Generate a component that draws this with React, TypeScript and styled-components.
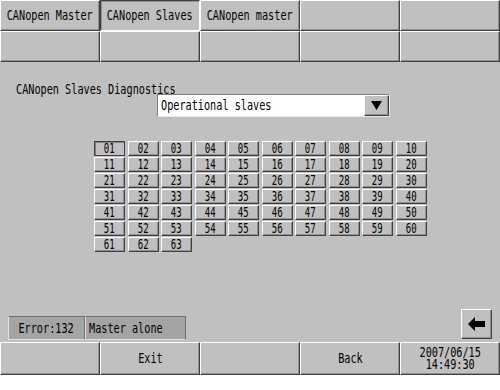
import React from "react";
import styled, { createGlobalStyle, css } from "styled-components";

const GlobalStyle = createGlobalStyle`
  html, body { margin: 0; padding: 0; background: #ffffff; }
  * { box-sizing: border-box; }
`;

const Screen = styled.div`
  width: 500px;
  height: 375px;
  background: #c0c0c0;
  display: flex;
  flex-direction: column;
  font-family: "DejaVu Sans Mono", "Liberation Mono", monospace;
  font-size: 13.7px;
  line-height: 11px;
  color: #000;
`;

const raised = css`
  border-top: 1px solid #ffffff;
  border-left: 1px solid #ffffff;
  border-bottom: 1px solid #404040;
  border-right: 1px solid #404040;
  box-shadow: inset -1px -1px 0 #909090;
`;

const sunken = css`
  border-top: 1px solid #404040;
  border-left: 1px solid #404040;
  border-bottom: 1px solid #ffffff;
  border-right: 1px solid #ffffff;
  box-shadow: inset 1px 1px 0 #909090;
`;

const ButtonBar = styled.div<{ $rows: number; $h: number }>`
  display: grid;
  grid-template-columns: repeat(5, 100px);
  grid-template-rows: repeat(${(p) => p.$rows}, ${(p) => p.$h}px);
`;

const PanelButton = styled.div<{ $pressed?: boolean }>`
  background: #c0c0c0;
  display: flex;
  flex-direction: column;
  align-items: center;
  justify-content: center;
  ${(p) => (p.$pressed ? sunken : raised)}
`;

const Label = styled.span<{ $size?: number; $scale?: number; $origin?: string; $lh?: number }>`
  display: inline-block;
  white-space: pre;
  text-align: center;
  font-size: ${(p) => p.$size ?? 13.7}px;
  line-height: ${(p) => p.$lh ?? 11}px;
  transform: scaleX(${(p) => p.$scale ?? 0.745});
  transform-origin: ${(p) => p.$origin ?? "center"};
`;

const Main = styled.div`
  flex: 1;
  display: flex;
  flex-direction: column;
`;

const Title = styled.div`
  margin: 22px 0 0 16px;
  height: 10px;
  display: flex;
  align-items: flex-start;
`;

const Dropdown = styled.div`
  margin: 0 0 0 157px;
  width: 233px;
  height: 23px;
  background: #ffffff;
  display: flex;
  border-top: 1px solid #808080;
  border-left: 1px solid #808080;
  border-bottom: 1px solid #e8e8e8;
  border-right: 1px solid #e8e8e8;
`;

const DropText = styled.div`
  flex: 1;
  display: flex;
  align-items: center;
  padding-left: 3px;
`;

const DropButton = styled.div`
  width: 25px;
  background: #c0c0c0;
  display: flex;
  align-items: center;
  justify-content: center;
  ${raised}
`;

const SlaveGrid = styled.div`
  margin: 24px 0 0 94px;
  display: grid;
  grid-template-columns: repeat(10, 31px);
  grid-auto-rows: 15px;
  column-gap: 2.5px;
  row-gap: 1px;
`;

const Cell = styled.div<{ $selected?: boolean }>`
  background: #c0c0c0;
  display: flex;
  align-items: center;
  justify-content: center;
  ${(p) =>
    p.$selected
      ? css`
          border: 1px solid #404040;
          box-shadow: inset 1px 1px 0 #808080;
        `
      : raised}
`;

const Footer = styled.div`
  margin-top: auto;
  padding: 0 8px 2px 8px;
  display: flex;
  align-items: flex-end;
  justify-content: space-between;
`;

const StatusGroup = styled.div`
  display: flex;
`;

const StatusBox = styled.div<{ $w: number; $center?: boolean }>`
  width: ${(p) => p.$w}px;
  height: 24px;
  background: #a4a4a4;
  display: flex;
  align-items: center;
  justify-content: ${(p) => (p.$center ? "center" : "flex-start")};
  padding-left: ${(p) => (p.$center ? 0 : 3)}px;
  border-top: 1px solid #707070;
  border-left: 1px solid #e0e0e0;
  border-bottom: 1px solid #e0e0e0;
  border-right: 1px solid #707070;
`;

const ArrowButton = styled.div`
  width: 31px;
  height: 30px;
  margin-bottom: 1px;
  background: #c0c0c0;
  display: flex;
  align-items: center;
  justify-content: center;
  ${raised}
`;

const cells = Array.from({ length: 63 }, (_, i) => String(i + 1).padStart(2, "0"));

export default function App() {
  return (
    <>
      <GlobalStyle />
      <Screen>
        <ButtonBar $rows={2} $h={31}>
          <PanelButton><Label>CANopen Master</Label></PanelButton>
          <PanelButton $pressed><Label>CANopen Slaves</Label></PanelButton>
          <PanelButton><Label>CANopen master</Label></PanelButton>
          <PanelButton />
          <PanelButton />
          <PanelButton />
          <PanelButton />
          <PanelButton />
          <PanelButton />
          <PanelButton />
        </ButtonBar>
        <Main>
          <Title>
            <Label $origin="left">CANopen Slaves Diagnostics</Label>
          </Title>
          <Dropdown>
            <DropText>
              <Label $origin="left">Operational slaves</Label>
            </DropText>
            <DropButton>
              <svg width="11" height="9" viewBox="0 0 11 9">
                <polygon points="0,0 11,0 5.5,9" fill="#000" />
              </svg>
            </DropButton>
          </Dropdown>
          <SlaveGrid>
            {cells.map((c, i) => (
              <Cell key={c} $selected={i === 0}>
                <Label $size={13.7} $scale={0.66} $lh={13}>{c}</Label>
              </Cell>
            ))}
          </SlaveGrid>
          <Footer>
            <StatusGroup>
              <StatusBox $w={77} $center><Label>Error:132</Label></StatusBox>
              <StatusBox $w={101}><Label $origin="left">Master alone</Label></StatusBox>
            </StatusGroup>
            <ArrowButton>
              <svg width="17" height="14" viewBox="0 0 17 14">
                <polygon points="0,7 7,0 7,4 17,4 17,10 7,10 7,14" fill="#000" />
              </svg>
            </ArrowButton>
          </Footer>
        </Main>
        <ButtonBar $rows={1} $h={33}>
          <PanelButton />
          <PanelButton><Label>Exit</Label></PanelButton>
          <PanelButton />
          <PanelButton><Label>Back</Label></PanelButton>
          <PanelButton>
            <Label $lh={11.5}>{"2007/06/15\n14:49:30"}</Label>
          </PanelButton>
        </ButtonBar>
      </Screen>
    </>
  );
}
